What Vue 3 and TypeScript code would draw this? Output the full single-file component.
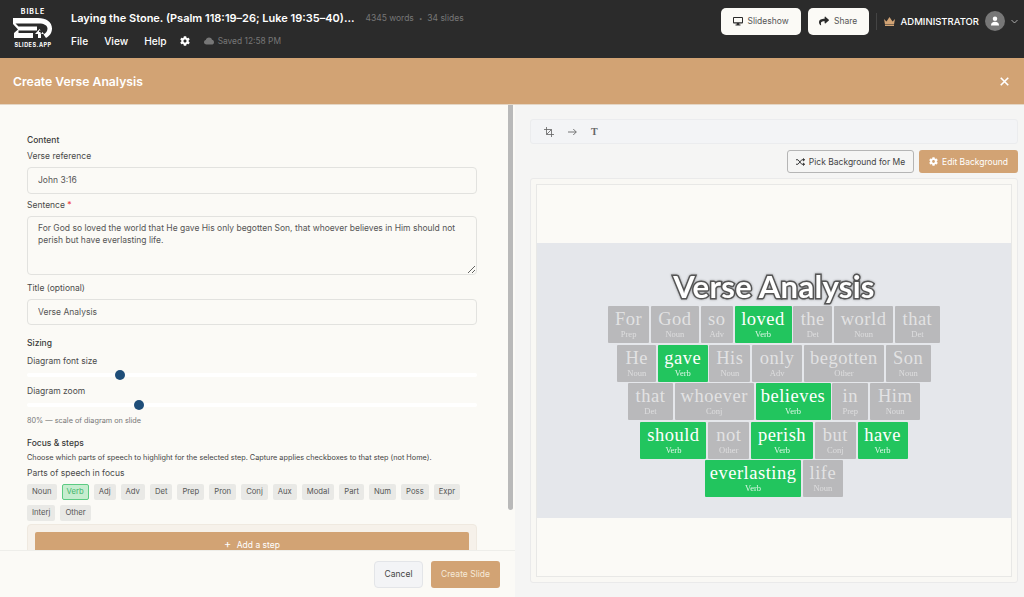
<script setup lang="ts">
interface Word {
  text: string
  pos: string
  w: number
}

const rows: Word[][] = [
  [
    { text: 'For', pos: 'Prep', w: 41 },
    { text: 'God', pos: 'Noun', w: 48 },
    { text: 'so', pos: 'Adv', w: 32 },
    { text: 'loved', pos: 'Verb', w: 57 },
    { text: 'the', pos: 'Det', w: 39 },
    { text: 'world', pos: 'Noun', w: 59 },
    { text: 'that', pos: 'Det', w: 45 },
  ],
  [
    { text: 'He', pos: 'Noun', w: 39 },
    { text: 'gave', pos: 'Verb', w: 49.5 },
    { text: 'His', pos: 'Noun', w: 41 },
    { text: 'only', pos: 'Adv', w: 50 },
    { text: 'begotten', pos: 'Other', w: 80 },
    { text: 'Son', pos: 'Noun', w: 45 },
  ],
  [
    { text: 'that', pos: 'Det', w: 45 },
    { text: 'whoever', pos: 'Conj', w: 79 },
    { text: 'believes', pos: 'Verb', w: 75 },
    { text: 'in', pos: 'Prep', w: 36 },
    { text: 'Him', pos: 'Noun', w: 50 },
  ],
  [
    { text: 'should', pos: 'Verb', w: 66 },
    { text: 'not', pos: 'Other', w: 41 },
    { text: 'perish', pos: 'Verb', w: 62 },
    { text: 'but', pos: 'Conj', w: 41 },
    { text: 'have', pos: 'Verb', w: 50 },
  ],
  [
    { text: 'everlasting', pos: 'Verb', w: 96 },
    { text: 'life', pos: 'Noun', w: 40 },
  ],
]

const tags = ['Noun', 'Verb', 'Adj', 'Adv', 'Det', 'Prep', 'Pron', 'Conj', 'Aux', 'Modal', 'Part', 'Num', 'Poss', 'Expr', 'Interj', 'Other']

const sentence = 'For God so loved the world that He gave His only begotten Son, that whoever believes in Him should not perish but have everlasting life.'

const cog = 'M487.4 315.7l-42.6-24.6c4.3-23.2 4.3-47 0-70.2l42.6-24.6c4.9-2.8 7.1-8.6 5.5-14-11.1-35.6-30-67.8-54.7-94.6-3.8-4.1-10-5.1-14.8-2.3L380.8 110c-17.9-15.4-38.5-27.3-60.8-35.1V25.8c0-5.6-3.9-10.5-9.4-11.7-36.7-8.2-74.3-7.8-109.2 0-5.5 1.2-9.4 6.1-9.4 11.7V75c-22.2 7.9-42.8 19.8-60.8 35.1L88.7 85.5c-4.9-2.8-11-1.9-14.8 2.3-24.7 26.7-43.6 58.9-54.7 94.6-1.7 5.4.6 11.2 5.5 14L67.3 221c-4.3 23.2-4.3 47 0 70.2l-42.6 24.6c-4.9 2.8-7.1 8.6-5.5 14 11.1 35.6 30 67.8 54.7 94.6 3.8 4.1 10 5.1 14.8 2.3l42.6-24.6c17.9 15.4 38.5 27.3 60.8 35.1v49.2c0 5.6 3.9 10.5 9.4 11.7 36.7 8.2 74.3 7.8 109.2 0 5.5-1.2 9.4-6.1 9.4-11.7v-49.2c22.2-7.9 42.8-19.8 60.8-35.1l42.6 24.6c4.9 2.8 11 1.9 14.8-2.3 24.7-26.7 43.6-58.9 54.7-94.6 1.5-5.5-.7-11.3-5.6-14.1zM256 336c-44.1 0-80-35.9-80-80s35.9-80 80-80 80 35.9 80 80-35.9 80-80 80z'
</script>

<template>
  <div class="app">
    <header class="topbar">
      <div class="logo">
        <span class="logo-top">BIBLE</span>
        <svg width="40" height="21" viewBox="0 0 40 21" fill="#fff">
          <path d="M0 0H25C33 0 39 4 39 10.500C39 15 36.500 18 33 20L30.500 16.500C33 15 34.500 13 34.500 10.500C34.500 7.500 31 5.500 26 5.500H2.500L5.500 8.500H24V12.500H5.500V15H20V20H1V15L5 11.500L0 6Z" />
          <path d="M25 20V16H22L26.500 11L31 16H28V20Z" />
          <path d="M26 12.500H27.500V11H29V12.500H30.500V14H29V15.500H27.500V14H26Z" fill="#2b2b2b" />
        </svg>
        <span class="logo-bottom">SLIDES.APP</span>
      </div>
      <div class="doc">
        <div class="doc-line">
          <span class="doc-title">Laying the Stone. (Psalm 118:19–26; Luke 19:35–40)...</span>
          <span class="doc-stats">4345 words</span>
          <span class="doc-dot">•</span>
          <span class="doc-stats">34 slides</span>
        </div>
        <nav class="menu">
          <span>File</span>
          <span>View</span>
          <span>Help</span>
          <svg class="menu-cog" width="10" height="10" viewBox="0 0 512 512" fill="#fff"><path :d="cog" /></svg>
          <svg class="cloud" width="10" height="8" viewBox="0 0 20 14" fill="#777">
            <path d="M5 14C2 14 0 12 0 9.500C0 7.300 1.500 5.600 3.500 5.200C4.200 2.200 6.700 0 10 0C13 0 15.300 1.800 16 4.500C18.300 5 20 7 20 9.300C20 12 18 14 15 14Z" />
          </svg>
          <span class="saved">Saved 12:58 PM</span>
        </nav>
      </div>
      <div class="top-actions">
        <button class="top-btn slideshow">
          <svg width="10" height="10" viewBox="0 0 20 20" fill="#2b2b2b">
            <path d="M2 2H18C19 2 20 3 20 4V13C20 14 19 15 18 15H12.500V17H15V19H5V17H7.500V15H2C1 15 0 14 0 13V4C0 3 1 2 2 2ZM2 4V12.500H18V4Z" />
          </svg>
          Slideshow
        </button>
        <button class="top-btn share">
          <svg width="10" height="10" viewBox="0 0 512 512" fill="#2b2b2b">
            <path d="M503.700 189.800L327.700 37.900C312.300 24.500 288 35.300 288 56v80.100C127.400 137.900 0 170.100 0 322.300c0 61.400 39.600 122.300 83.300 154.100 13.700 9.900 33.100-2.500 28.100-18.600C66 312.600 132.900 274.300 288 272.100V360c0 20.700 24.300 31.500 39.700 18.200l176-152c11.100-9.500 11.100-26.900 0-36.400z" />
          </svg>
          Share
        </button>
        <span class="sep"></span>
        <svg width="11" height="9" viewBox="0 0 22 18" fill="#d2a374">
          <path d="M0 4L5 9L11 0L17 9L22 4L20 15H2Z" />
          <rect x="2" y="16" width="18" height="2" />
        </svg>
        <span class="user">ADMINISTRATOR</span>
        <span class="avatar">
          <svg width="10" height="10" viewBox="0 0 20 20" fill="#fff">
            <circle cx="10" cy="5.500" r="4.500" />
            <path d="M2 19C2 14 5 11.500 10 11.500C15 11.500 18 14 18 19Z" />
          </svg>
        </span>
        <svg width="7" height="5" viewBox="0 0 14 10" fill="none" stroke="#ccc" stroke-width="1.600"><path d="M1 2L7 8L13 2" /></svg>
      </div>
    </header>

    <div class="modal-head">
      <span>Create Verse Analysis</span>
      <svg width="9" height="9" viewBox="0 0 12 12" stroke="#fff" stroke-width="2.200" fill="none"><path d="M1 1L11 11M11 1L1 11" /></svg>
    </div>

    <main class="body">
      <section class="left">
        <div class="left-scroll">
          <div class="form">
            <div class="section-label first">Content</div>
            <label class="field-label">Verse reference</label>
            <input class="input" value="John 3:16" />
            <label class="field-label">Sentence <span class="req">*</span></label>
            <textarea class="input area" :value="sentence"></textarea>
            <label class="field-label">Title (optional)</label>
            <input class="input" value="Verse Analysis" />

            <div class="section-label sizing">Sizing</div>
            <label class="field-label font-size-label">Diagram font size</label>
            <input class="range" type="range" min="0" max="1000" value="200" />
            <label class="field-label">Diagram zoom</label>
            <input class="range" type="range" min="0" max="1000" value="243" />
            <div class="hint">80% — scale of diagram on slide</div>

            <div class="section-label focus">Focus &amp; steps</div>
            <div class="help">Choose which parts of speech to highlight for the selected step. Capture applies checkboxes to that step (not Home).</div>
            <label class="field-label pos-label">Parts of speech in focus</label>
            <div class="tags">
              <span v-for="t in tags" :key="t" class="tag" :class="{ on: t === 'Verb' }">{{ t }}</span>
            </div>
            <div class="steps">
              <button class="add-step"><span class="plus">+</span> Add a step</button>
            </div>
          </div>
          <div class="scrollbar"><div class="thumb"></div></div>
        </div>
        <footer class="foot">
          <button class="btn-cancel">Cancel</button>
          <button class="btn-create">Create Slide</button>
        </footer>
      </section>

      <section class="right">
        <div class="toolbar">
          <svg width="10" height="10" viewBox="0 0 12 12" fill="none" stroke="#666" stroke-width="1">
            <path d="M3 0V9H12M0 3H9V12M3 9L9 3" />
          </svg>
          <svg width="9" height="8" viewBox="0 0 12 10" fill="none" stroke="#666" stroke-width="1.200"><path d="M0 5H11M7 1L11 5L7 9" /></svg>
          <span class="t-icon">T</span>
        </div>
        <div class="bg-actions">
          <button class="btn-pick">
            <svg width="9" height="8" viewBox="0 0 14 12" fill="none" stroke="#333" stroke-width="1.500">
              <path d="M0 2.500H3L9 9.500H12M0 9.500H3L9 2.500H12" />
              <path d="M11 0.500L13.500 2.500L11 4.500M11 7.500L13.500 9.500L11 11.500" fill="#333" />
            </svg>
            Pick Background for Me
          </button>
          <button class="btn-edit">
            <svg width="9" height="9" viewBox="0 0 512 512" fill="#fff"><path :d="cog" /></svg>
            Edit Background
          </button>
        </div>
        <div class="stage">
          <div class="slide">
            <div class="band">
              <div class="v-title">Verse Analysis</div>
              <div class="diagram">
                <div v-for="(row, i) in rows" :key="i" class="d-row">
                  <div
                    v-for="(word, j) in row"
                    :key="j"
                    class="tile"
                    :class="{ verb: word.pos === 'Verb' }"
                    :style="{ width: word.w + 'px' }"
                  >
                    <span class="w">{{ word.text }}</span>
                    <span class="p">{{ word.pos }}</span>
                  </div>
                </div>
              </div>
            </div>
          </div>
        </div>
      </section>
    </main>
  </div>
</template>

<style>
html, body {
  margin: 0;
  overflow: hidden;
}
</style>

<style scoped>
.app {
  width: 1024px;
  height: 597px;
  display: flex;
  flex-direction: column;
  overflow: hidden;
  font-family: Inter, "Liberation Sans", sans-serif;
  color: #3a3a3a;
  background: #fbfaf6;
}
button { font-family: inherit; cursor: pointer; }

.topbar {
  height: 58px;
  flex: none;
  background: #2b2b2b;
  display: flex;
  padding: 0 6px 0 13px;
  box-sizing: border-box;
}
.logo {
  width: 40px;
  padding-top: 8px;
  display: flex;
  flex-direction: column;
  align-items: center;
  color: #fff;
  font-weight: 700;
  line-height: 1;
}
.logo svg { margin-top: 3px; }
.logo-top { font-size: 7px; letter-spacing: 1px; }
.logo-bottom { font-size: 5.500px; letter-spacing: 0.500px; margin-top: 4px; }
.doc { margin-left: 18px; flex: 1; }
.doc-line {
  display: flex;
  align-items: center;
  height: 14px;
  margin-top: 11px;
}
.doc-title { color: #fff; font-size: 11px; font-weight: 600; margin-right: 11px; }
.doc-stats { color: #777; font-size: 8.500px; }
.doc-dot { color: #777; font-size: 6px; margin: 0 5px; }
.menu {
  display: flex;
  align-items: center;
  color: #fff;
  font-size: 10.200px;
  font-weight: 500;
  margin-top: 9px;
  height: 14px;
}
.menu span { margin-right: 16px; }
.menu .saved { color: #777; font-size: 8.400px; font-weight: 400; }
.menu-cog { margin-left: -3px; margin-right: 14px; }
.cloud { margin-right: 4px; }
.top-actions {
  display: flex;
  align-items: center;
  height: 42px;
}
.top-btn {
  height: 27px;
  display: flex;
  align-items: center;
  justify-content: center;
  gap: 5px;
  background: #fbfaf6;
  border: 0;
  border-radius: 5px;
  color: #555;
  font-size: 8.500px;
  padding: 0;
}
.slideshow { width: 80px; margin-right: 7px; }
.share { width: 61px; }
.sep { width: 1px; height: 17px; background: #444; margin: 0 7px; }
.user { color: #fff; font-size: 9.500px; font-weight: 500; margin: 0 6px; }
.avatar {
  width: 20px;
  height: 20px;
  border-radius: 50%;
  background: #777;
  display: flex;
  align-items: center;
  justify-content: center;
  margin-right: 6px;
}

.modal-head {
  height: 47px;
  flex: none;
  box-sizing: border-box;
  background: #d2a374;
  border-bottom: 1px solid #e4d6c5;
  color: #fff;
  font-size: 12.200px;
  font-weight: 600;
  display: flex;
  align-items: center;
  justify-content: space-between;
  padding: 0 15px 0 13px;
}

.body { flex: 1; min-height: 0; display: flex; }
.left {
  width: 515px;
  flex: none;
  display: flex;
  flex-direction: column;
  background: #fbfaf6;
}
.left-scroll { flex: 1; min-height: 0; display: flex; overflow: hidden; }
.form {
  width: 450px;
  padding: 30px 0 0 27px;
  flex: none;
}
.scrollbar { margin-left: 31px; width: 5px; }
.thumb { height: 405px; background: #b9b9b9; border-radius: 0 0 3px 3px; }
.section-label { font-size: 8.500px; font-weight: 500; color: #3a3a3a; line-height: 10px; }
.sizing { margin-top: 13px; }
.focus { margin-top: 12px; }
.field-label {
  display: block;
  font-size: 8.500px;
  line-height: 11px;
  color: #4a4a4a;
  margin-top: 6px;
}
.font-size-label { margin-top: 8px; }
.req { color: #ef4444; }
.input {
  display: block;
  width: 100%;
  height: 26.500px;
  box-sizing: border-box;
  background: #fbfaf6;
  border: 1px solid #e2e2df;
  border-radius: 4px;
  padding: 0 10px;
  margin-top: 5px;
  font: 8.500px/12px Inter, "Liberation Sans", sans-serif;
  color: #555;
  outline: none;
}
.area { height: 59px; padding: 5px 10px; margin-bottom: 8px; }
.range {
  display: block;
  width: 100%;
  height: 10px;
  margin: 3px 0 0;
  -webkit-appearance: none;
  appearance: none;
  background: transparent;
}
.range::-webkit-slider-runnable-track { height: 4px; background: #fff; border-radius: 2px; }
.range::-webkit-slider-thumb {
  -webkit-appearance: none;
  width: 10px;
  height: 10px;
  margin-top: -3px;
  border-radius: 50%;
  background: #1f4e79;
}
.hint { font-size: 7.300px; line-height: 10px; color: #777; margin-top: 6px; }
.help { font-size: 7.300px; line-height: 10px; color: #444; margin-top: 5px; }
.pos-label { margin-top: 5px; }
.tags { display: flex; flex-wrap: wrap; gap: 5px; margin-top: 5px; }
.tag {
  height: 16px;
  line-height: 16px;
  padding: 0 5px;
  box-sizing: border-box;
  background: #e9e9e6;
  border-radius: 2px;
  font-size: 7.700px;
  color: #555;
}
.tag.on {
  background: #c6edcf;
  color: #3fb56a;
  border: 1px solid #5ccb82;
  line-height: 14px;
  padding: 0 4px;
}
.steps {
  margin-top: 3px;
  padding: 7px;
  background: #f6f1ea;
  border: 1px solid #efe9e0;
  border-radius: 4px;
}
.add-step {
  width: 100%;
  height: 24px;
  background: #d2a374;
  border: 0;
  border-radius: 2px;
  color: #fff;
  font-size: 8.500px;
  display: block;
}
.plus { font-size: 11px; margin-right: 3px; }
.foot {
  height: 47px;
  flex: none;
  box-sizing: border-box;
  background: #fbfaf6;
  border-top: 1px solid #eeeeea;
  display: flex;
  justify-content: flex-end;
  align-items: center;
  gap: 8px;
  padding-right: 15px;
}
.btn-cancel {
  width: 49px;
  height: 27px;
  background: #f3f4f6;
  border: 1px solid #e3e5e8;
  border-radius: 4px;
  color: #444;
  font-size: 8.500px;
  padding: 0;
}
.btn-create {
  width: 69px;
  height: 27px;
  background: #d2a374;
  border: 0;
  border-radius: 3px;
  color: #f6ead9;
  font-size: 8.500px;
  padding: 0;
}

.right {
  flex: 1;
  background: #f5f5f4;
  padding: 14px 6px 0 15px;
  box-sizing: border-box;
  display: flex;
  flex-direction: column;
}
.toolbar {
  height: 25px;
  box-sizing: border-box;
  background: #f3f4f6;
  border: 1px solid #ebecee;
  border-radius: 3px;
  display: flex;
  align-items: center;
  gap: 14px;
  padding-left: 13px;
}
.t-icon { font: 700 10px "Liberation Serif", serif; color: #666; }
.bg-actions {
  display: flex;
  justify-content: flex-end;
  gap: 5px;
  margin-top: 6px;
}
.btn-pick, .btn-edit {
  height: 23px;
  display: flex;
  align-items: center;
  justify-content: center;
  gap: 4px;
  font-size: 8.500px;
  border-radius: 3px;
  padding: 0;
  box-sizing: border-box;
}
.btn-pick { width: 127px; background: #f5f5f4; border: 1px solid #b5b5b5; color: #444; }
.btn-edit { width: 99px; background: #d2a374; border: 0; color: #fff; }
.stage {
  margin-top: 5px;
  height: 405px;
  box-sizing: border-box;
  padding: 5px;
  background: #f9f8f4;
  border: 1px solid #eaeaea;
  border-radius: 3px;
  display: flex;
}
.slide {
  flex: 1;
  background: #fbfaf6;
  border: 1px solid #e8e8e6;
  box-sizing: border-box;
  display: flex;
  align-items: center;
}
.band {
  flex: 1;
  height: 275px;
  background: #e5e7eb;
  display: flex;
  flex-direction: column;
  align-items: center;
}
.v-title {
  margin-top: 25px;
  font-size: 31px;
  line-height: 36px;
  font-weight: 700;
  font-family: Lato, sans-serif;
  letter-spacing: 0.300px;
  color: #fff;
  -webkit-text-stroke: 3px #555;
  paint-order: stroke fill;
  filter: drop-shadow(0 0 1px rgba(0, 0, 0, 0.35));
}
.diagram {
  margin-top: 2px;
  display: flex;
  flex-direction: column;
  gap: 1.500px;
}
.d-row { display: flex; justify-content: center; gap: 1.800px; }
.tile {
  height: 37px;
  background: #b9b9bb;
  display: flex;
  flex-direction: column;
  align-items: center;
  justify-content: center;
  color: rgba(255, 255, 255, 0.6);
  flex: none;
  border-radius: 1px;
}
.tile.verb { background: #22c55e; color: #fff; }
.w {
  font-family: "Liberation Serif", serif;
  font-size: 18.500px;
  line-height: 19px;
  letter-spacing: 0.500px;
  margin-top: 1px;
}
.p {
  font-family: "Liberation Serif", serif;
  font-size: 8.500px;
  line-height: 11px;
  opacity: 0.85;
}
</style>
